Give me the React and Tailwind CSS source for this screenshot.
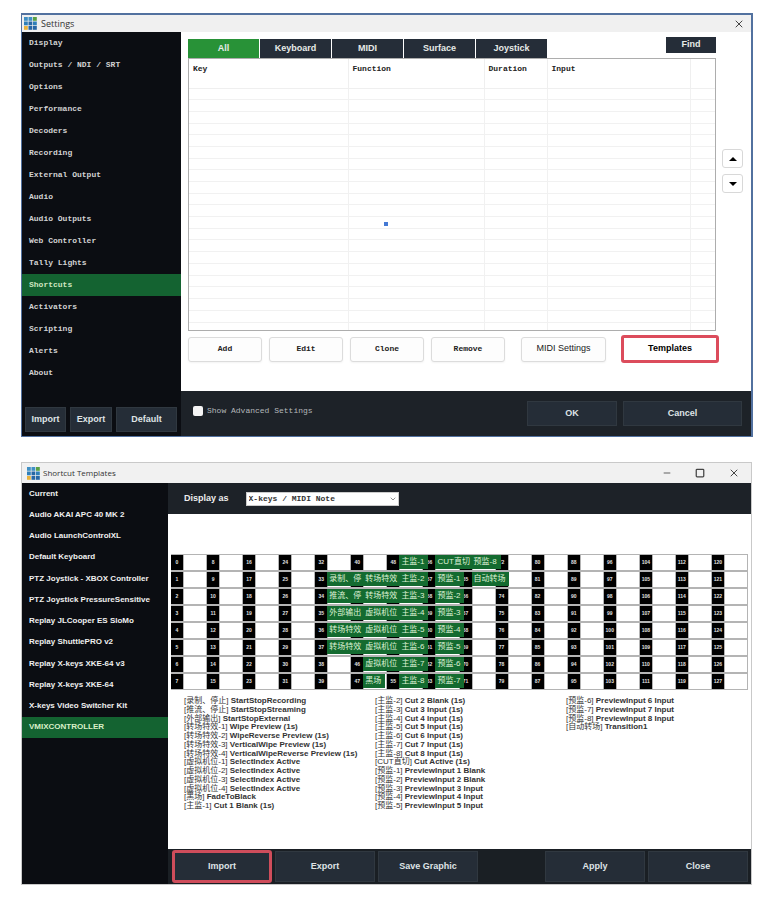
import React from "react";
import { X, Minus, Square, ChevronDown } from "lucide-react";

const MONO = "font-['Liberation_Mono','Noto_Sans_CJK_SC',monospace]";
const SANS = "font-['Liberation_Sans','Noto_Sans_CJK_SC',sans-serif]";

const settingsPages = [
  "Display", "Outputs / NDI / SRT", "Options", "Performance", "Decoders", "Recording",
  "External Output", "Audio", "Audio Outputs", "Web Controller", "Tally Lights",
  "Shortcuts", "Activators", "Scripting", "Alerts", "About",
];

const tabs = ["All", "Keyboard", "MIDI", "Surface", "Joystick"];

const templates = [
  "Current", "Audio AKAI APC 40 MK 2", "Audio LaunchControlXL", "Default Keyboard",
  "PTZ Joystick - XBOX Controller", "PTZ Joystick PressureSensitive",
  "Replay JLCooper ES SloMo", "Replay ShuttlePRO v2", "Replay X-keys XKE-64 v3",
  "Replay X-keys XKE-64", "X-keys Video Switcher Kit", "VMIXCONTROLLER",
];

// Assigned keys, indexed by MIDI note number.
const keyLabels = {
  33: "录制、停", 34: "推流、停", 35: "外部输出", 36: "转场特效", 37: "转场特效",
  41: "转场特效", 42: "转场特效", 43: "虚拟机位", 44: "虚拟机位", 45: "虚拟机位",
  46: "虚拟机位", 47: "黑场",
  48: "主监-1", 49: "主监-2", 50: "主监-3", 51: "主监-4", 52: "主监-5", 53: "主监-6",
  54: "主监-7", 55: "主监-8",
  56: "CUT直切", 57: "预监-1", 58: "预监-2", 59: "预监-3", 60: "预监-4", 61: "预监-5",
  62: "预监-6", 63: "预监-7",
  64: "预监-8", 65: "自动转场",
};

const keyNumber = (col, row) => col * 8 + row;

// A label without a numeric suffix fills the key and the number strip of the next one.
const isWide = (label) => Boolean(label) && /^[^-]{4,}$/.test(label);

function labelWidth(label) {
  if (isWide(label)) return "min-w-[37px]";
  return label.includes("-") ? "min-w-[29px]" : "min-w-[22px]";
}

const legend = [
  [
    "[录制、停止] StartStopRecording", "[推流、停止] StartStopStreaming",
    "[外部输出] StartStopExternal", "[转场特效-1] Wipe Preview (1s)",
    "[转场特效-2] WipeReverse Preview (1s)", "[转场特效-3] VerticalWipe Preview (1s)",
    "[转场特效-4] VerticalWipeReverse Preview (1s)", "[虚拟机位-1] SelectIndex Active",
    "[虚拟机位-2] SelectIndex Active", "[虚拟机位-3] SelectIndex Active",
    "[虚拟机位-4] SelectIndex Active", "[黑场] FadeToBlack", "[主监-1] Cut 1 Blank (1s)",
  ],
  [
    "[主监-2] Cut 2 Blank (1s)", "[主监-3] Cut 3 Input (1s)", "[主监-4] Cut 4 Input (1s)",
    "[主监-5] Cut 5 Input (1s)", "[主监-6] Cut 6 Input (1s)", "[主监-7] Cut 7 Input (1s)",
    "[主监-8] Cut 8 Input (1s)", "[CUT直切] Cut Active (1s)", "[预监-1] PreviewInput 1 Blank",
    "[预监-2] PreviewInput 2 Blank", "[预监-3] PreviewInput 3 Input",
    "[预监-4] PreviewInput 4 Input", "[预监-5] PreviewInput 5 Input",
  ],
  [
    "[预监-6] PreviewInput 6 Input", "[预监-7] PreviewInput 7 Input",
    "[预监-8] PreviewInput 8 Input", "[自动转场] Transition1",
  ],
];

function Logo() {
  const colors = ["#3f8fc4", "#3f8fc4", "#58a043", "#2f7fb8", "#2766a5", "#2f7fb8", "#e9b23c", "#2766a5", "#2766a5"];
  return (
    <svg viewBox="0 0 13 13" className="size-[13px]" aria-hidden="true">
      {colors.map((c, i) => (
        <rect key={i} x={(i % 3) * 4.5} y={Math.floor(i / 3) * 4.5} width="3.8" height="3.8" fill={c} />
      ))}
    </svg>
  );
}

function DarkButton({ className = "", children }) {
  return (
    <button type="button" className={`border border-[#303840] bg-[#252d37] text-center font-bold text-[#dfe3e6] ${className}`}>
      {children}
    </button>
  );
}

function LightButton({ className = "", children }) {
  return (
    <button type="button" className={`h-[25px] rounded-[3px] border border-[#dcdcdc] bg-[#fdfdfd] text-[#222] shadow-xs ${className}`}>
      {children}
    </button>
  );
}

function SettingsWindow() {
  return (
    <section className="border border-t-2 border-r-2 border-[#52719f] bg-white">
      <header className="flex h-[17px] items-center bg-[#f0f0f0] pr-[6px] pl-[2px]">
        <Logo />
        <h1 className="ml-1 flex-1 font-['Open_Sans',sans-serif] text-[9px] text-[#333]">Settings</h1>
        <button type="button" aria-label="Close"><X className="size-3 text-[#444]" strokeWidth={2} /></button>
      </header>
      <div className="flex">
        <nav className="flex w-[159px] shrink-0 flex-col bg-[#0b0d12]">
          <ul>
            {settingsPages.map((p) => (
              <li key={p}>
                <a href="#" className={`flex h-[22px] items-center pl-[7px] text-[8px] font-bold ${MONO} ${p === "Shortcuts" ? "bg-[#146331] text-[#cfe6c0]" : "text-[#d2d2d2]"}`}>{p}</a>
              </li>
            ))}
          </ul>
          <div className="mt-auto flex h-[29px] gap-1 pr-1 pl-[3px] text-[9px]">
            <DarkButton className="h-[25px] w-[41px]">Import</DarkButton>
            <DarkButton className="h-[25px] w-[42px]">Export</DarkButton>
            <DarkButton className="h-[25px] flex-1">Default</DarkButton>
          </div>
        </nav>
        <div className="flex min-w-0 flex-1 flex-col">
          <main className="pt-[5px] pb-7 pl-[7px]">
            <div className="flex">
              <div className="min-w-0 flex-1">
                <div className="flex h-[21px] items-start justify-between text-[9px]">
                  <div role="tablist" className="flex gap-px pt-[2px]">
                    {tabs.map((t) => (
                      <button key={t} type="button" role="tab" aria-selected={t === "All"} className={`h-[19px] w-[71px] font-bold text-[#e8ebe8] ${t === "All" ? "bg-[#289237]" : "bg-[#252d38]"}`}>{t}</button>
                    ))}
                  </div>
                  <button type="button" className="h-4 w-[50px] bg-[#252d38] font-bold text-[#e8ebe8]">Find</button>
                </div>
                <div className="relative h-[273px] border border-[#adadad] bg-white">
                  <table className="h-full w-full table-fixed border-collapse">
                    <colgroup>
                      <col className="w-[159px]" /><col className="w-[136px]" /><col className="w-[63px]" /><col className="w-[143px]" /><col />
                    </colgroup>
                    <thead>
                      <tr className={`h-[29px] text-left align-top text-[8px] leading-[20px] text-[#222] ${MONO}`}>
                        {["Key", "Function", "Duration", "Input"].map((h) => (
                          <th key={h} className="border-r border-b border-[#efefef] p-0 pl-1 font-bold">{h}</th>
                        ))}
                        <td className="border-b border-[#efefef] p-0" />
                      </tr>
                    </thead>
                    <tbody>
                      {Array.from({ length: 20 }, (_, r) => (
                        <tr key={r}>
                          {[0, 1, 2, 3, 4].map((c) => (
                            <td key={c} className="border-r border-b border-[#f1f1f1] p-0 last:border-r-0" />
                          ))}
                        </tr>
                      ))}
                      <tr className="h-2">
                        {[0, 1, 2, 3, 4].map((c) => (
                          <td key={c} className="border-r border-[#f1f1f1] p-0 last:border-r-0" />
                        ))}
                      </tr>
                    </tbody>
                  </table>
                  <span className="absolute top-[60%] left-[37%] size-1 bg-[#4479d4]" />
                </div>
              </div>
              <div className="mt-[112px] flex w-[35px] flex-col gap-[6px] pl-[6px]">
                {["M0 4L4 0L8 4Z", "M0 0L4 4L8 0Z"].map((d, i) => (
                  <button key={d} type="button" aria-label={i ? "Move down" : "Move up"} className="flex h-[19px] w-[21px] items-center justify-center rounded-[3px] border border-[#d8d8d8] bg-white">
                    <svg viewBox="0 0 8 4" className="h-1 w-2"><path d={d} fill="#000" /></svg>
                  </button>
                ))}
              </div>
            </div>
            <div className="mt-1 flex h-7 items-center gap-[7px] text-[8px]">
              {["Add", "Edit", "Clone", "Remove"].map((b) => (
                <LightButton key={b} className={`w-[74px] font-bold ${MONO}`}>{b}</LightButton>
              ))}
              <LightButton className="ml-[9px] w-[85px] text-[9px]">MIDI Settings</LightButton>
              <button type="button" className="ml-2 h-7 w-[98px] rounded-[3px] border-3 border-[#dc4c5c] bg-white text-[9px] font-bold text-black">Templates</button>
            </div>
          </main>
          <footer className="flex h-[45px] items-start bg-[#1d2228] pt-[10px] pr-[9px] pl-3 text-[9px]">
            <input id="advanced" type="checkbox" className="mt-[5px] size-[10px] appearance-none rounded-[2px] bg-[#f4f4f4]" />
            <label htmlFor="advanced" className={`mt-1 ml-1 flex-1 text-[8px] text-[#b4b8ba] ${MONO}`}>Show Advanced Settings</label>
            <DarkButton className="h-[25px] w-[90px]">OK</DarkButton>
            <DarkButton className="ml-[6px] h-[25px] w-[119px]">Cancel</DarkButton>
          </footer>
        </div>
      </div>
    </section>
  );
}

function KeyGrid() {
  return (
    <table className="w-full table-fixed border-collapse">
      <tbody>
        {Array.from({ length: 8 }, (_, row) => (
          <tr key={row}>
            {Array.from({ length: 16 }, (_, col) => {
              const n = keyNumber(col, row);
              const label = keyLabels[n];
              return (
                <td key={col} className="p-0">
                  <div className="relative flex h-[17px] border-y border-[#b4b4b4]">
                    <span className="flex w-3 items-center justify-center bg-black text-[5px] font-bold text-[#e0e0e0]">
                      {isWide(keyLabels[n - 8]) ? null : n}
                    </span>
                    <span className="flex-1 border-x border-[#b4b4b4]" />
                    {label && (
                      <span className={`absolute top-0 left-3 z-10 h-[14px] bg-[#146b30] px-[2px] text-[8px] leading-[14px] whitespace-nowrap text-[#dff2d6] ${labelWidth(label)}`}>{label}</span>
                    )}
                  </div>
                </td>
              );
            })}
          </tr>
        ))}
      </tbody>
    </table>
  );
}

function LegendLine({ text }) {
  const end = text.indexOf("]") + 1;
  return (
    <li>
      <span className="font-normal">{text.slice(0, end)}</span>
      {text.slice(end)}
    </li>
  );
}

function TemplatesWindow() {
  return (
    <section className="mr-px border border-[#c9c9c9] bg-white">
      <header className="flex h-5 items-center bg-[#f1f1f1] pr-[11px] pl-[5px]">
        <Logo />
        <h1 className="ml-[3px] flex-1 font-['Open_Sans',sans-serif] text-[8px] text-[#333]">Shortcut Templates</h1>
        <div className="flex items-center gap-[23px] text-[#444]">
          <button type="button" aria-label="Minimize"><Minus className="size-[10px]" strokeWidth={2} /></button>
          <button type="button" aria-label="Maximize"><Square className="size-[10px]" strokeWidth={3} /></button>
          <button type="button" aria-label="Close"><X className="size-3" strokeWidth={2} /></button>
        </div>
      </header>
      <div className="flex">
        <nav className="w-[146px] shrink-0 bg-[#0b0d12]">
          <ul className="grid h-[255px] auto-rows-fr">
            {templates.map((t) => (
              <li key={t} className={t === "VMIXCONTROLLER" ? "bg-[#146331] text-[#d9f0c8]" : "text-[#f0f0f0]"}>
                <a href="#" className="flex h-full items-center pl-[7px] text-[8px] font-bold whitespace-nowrap">{t}</a>
              </li>
            ))}
          </ul>
        </nav>
        <div className="flex min-w-0 flex-1 flex-col">
          <div className="flex h-[31px] items-center bg-[#1d2228] pl-4">
            <label htmlFor="display-as" className="text-[9px] font-bold text-[#eee]">Display as</label>
            <div className="relative ml-[17px] flex">
              <select id="display-as" className={`h-[14px] w-[153px] appearance-none border border-[#ccc] bg-white pl-[2px] text-[8px] leading-[10px] font-bold text-[#333] ${MONO}`}>
                <option>X-keys / MIDI Note</option>
              </select>
              <ChevronDown className="pointer-events-none absolute top-[3px] right-[2px] size-2 text-[#555]" />
            </div>
          </div>
          <main className="px-[3px] pt-10 pb-[39px]">
            <KeyGrid />
            <div className="mt-[6px] grid grid-cols-[1fr_1fr_182px] pl-[13px] text-[8px] font-bold whitespace-nowrap text-[#333]">
              {legend.map((lines, i) => (
                <ul key={i} className="grid h-[114px] grid-rows-[repeat(13,minmax(0,1fr))] leading-[9px]">
                  {lines.map((l) => <LegendLine key={l} text={l} />)}
                </ul>
              ))}
            </div>
          </main>
          <footer className="flex h-[35px] items-center gap-[3px] bg-[#1a1f24] pr-[3px] pl-1 text-[9px]">
            <button type="button" className="h-[33px] w-[100px] rounded-[3px] border-3 border-[#cf4d5b] bg-[#252d37] font-bold text-[#dfe3e6]">Import</button>
            <DarkButton className="h-[31px] w-[100px]">Export</DarkButton>
            <DarkButton className="h-[31px] w-[100px]">Save Graphic</DarkButton>
            <DarkButton className="ml-auto h-[31px] w-[100px]">Apply</DarkButton>
            <DarkButton className="h-[31px] w-[100px]">Close</DarkButton>
          </footer>
        </div>
      </div>
    </section>
  );
}

export default function App() {
  return (
    <div className={`flex min-h-screen flex-col gap-[25px] bg-white pt-[13px] pr-[15px] pl-[21px] ${SANS}`}>
      <SettingsWindow />
      <TemplatesWindow />
    </div>
  );
}
